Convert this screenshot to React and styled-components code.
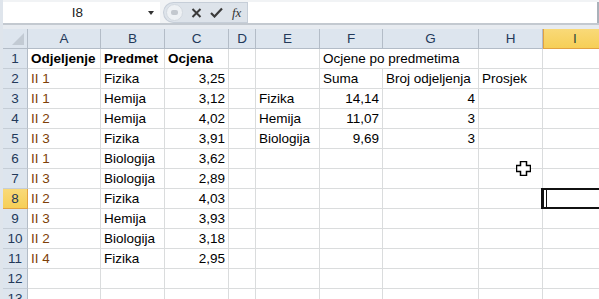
import React from 'react'
import styled, { createGlobalStyle } from 'styled-components'

const GlobalStyle = createGlobalStyle`
  body {
    margin: 0;
    overflow: hidden;
    font-family: "Liberation Sans", Arial, sans-serif;
  }
`;

const Window = styled.div`
  width: 599px;
  height: 299px;
  overflow: hidden;
  background-color: #dfe5ec;
  padding-left: 3px;
  box-sizing: border-box;
`;

const FormulaBar = styled.div`
  display: flex;
  height: 21px;
  padding-top: 2px;
  border-bottom: 2px solid #c3c9d0;
  background-color: #f1f3f5;
`;

const NameBox = styled.div`
  width: 157px;
  display: flex;
  align-items: center;
  background-color: white;
  font-size: 13.5px;
  color: #222;
`;

const NameText = styled.div`
  flex: 1;
  text-align: center;
  padding-left: 4px;
`;

const Arrow = styled.div`
  width: 0;
  height: 0;
  margin-right: 6px;
  border-left: 3.5px solid transparent;
  border-right: 3.5px solid transparent;
  border-top: 4px solid #333;
`;

const ButtonGroup = styled.div`
  width: 84px;
  margin-left: 3px;
  display: flex;
  align-items: center;
  gap: 8px;
  background-color: #dde3ea;
  border: 1px solid #c6ced8;
  border-right: none;
  border-radius: 11px 0 0 11px;
  box-sizing: border-box;
  padding-left: 2px;
`;

const Knob = styled.div`
  width: 15px;
  height: 15px;
  border-radius: 50%;
  background-color: #eef1f4;
  border: 1px solid #d3d9e0;
  display: flex;
  align-items: center;
  justify-content: center;
`;

const KnobDot = styled.div`
  width: 7px;
  height: 5px;
  border-radius: 2px;
  background-color: #c3c8ce;
`;

const Fx = styled.span`
  font-family: "Liberation Serif", serif;
  font-style: italic;
  font-size: 13px;
  color: #333;
  margin-left: 1px;
`;

const FormulaInput = styled.div`
  flex: 1;
  background-color: white;
  border-left: 1px solid #c6ced8;
  border-right: 2px solid #a9b1ba;
`;

const Gap = styled.div`
  height: 4px;
  background-color: #e7ebf0;
`;

const Sheet = styled.div`
  display: grid;
  grid-template-columns: 25px 73px 64px 64px 27px 64px 63px 96px 64px 64px;
  grid-auto-rows: 20px;
  background-color: white;
  font-size: 13.5px;
`;

const Corner = styled.div`
  background-color: #dde5ee;
  border-right: 1px solid #b3bcc7;
  border-bottom: 1px solid #b3bcc7;
  position: relative;
  &::after {
    content: '';
    position: absolute;
    right: 3px;
    bottom: 3px;
    border-left: 12px solid transparent;
    border-bottom: 12px solid #c2cad3;
  }
`;

const ColHead = styled.div`
  background: ${p => (p.$active ? 'linear-gradient(#f9d978, #f6cf57)' : '#dde5ee')};
  border-right: 1px solid ${p => (p.$active ? '#e2a241' : '#b3bcc7')};
  border-bottom: 1px solid ${p => (p.$active ? '#e2a241' : '#b3bcc7')};
  border-left: ${p => (p.$active ? '1px solid #e2a241' : 'none')};
  color: ${p => (p.$active ? '#2d4a3a' : '#23395a')};
  text-align: center;
  line-height: 19px;
`;

const RowHead = styled.div`
  background: ${p => (p.$active ? 'linear-gradient(#f9d978, #f6cf57)' : '#dde5ee')};
  border-right: 1px solid ${p => (p.$active ? '#e2a241' : '#b3bcc7')};
  border-bottom: 1px solid ${p => (p.$active ? '#e2a241' : '#c5cdd6')};
  color: #23395a;
  text-align: center;
  line-height: 19px;
`;

const Cell = styled.div`
  grid-column: span ${p => p.$span || 1};
  border-right: 1px solid #dadcdd;
  border-bottom: 1px solid #dadcdd;
  padding: 0 3px;
  line-height: 19px;
  white-space: nowrap;
  text-align: ${p => (p.$num ? 'right' : 'left')};
  font-weight: ${p => (p.$bold ? 'bold' : 'normal')};
  color: ${p => p.$color || '#000'};
  position: relative;
  overflow: ${p => (p.$selected ? 'visible' : 'hidden')};
  ${p =>
    p.$selected &&
    `
    &::after {
      content: '';
      position: absolute;
      left: -2px;
      top: -1px;
      right: -4px;
      bottom: -1px;
      border: 2px solid #111;
      border-left-width: 3px;
    }
    &::before {
      content: '';
      position: absolute;
      left: 3px;
      top: 0;
      bottom: 0;
      border-left: 1px solid #111;
    }
  `}
`;

const Cursor = styled.svg`
  position: absolute;
  left: 513px;
  top: 132px;
`;

const Page = styled.div`
  position: relative;
`;

const COLS = ['A', 'B', 'C', 'D', 'E', 'F', 'G', 'H', 'I'];
const BROWN = '#7e3f08';

const rows = [
  [['Odjeljenje', { bold: true }], ['Predmet', { bold: true }], ['Ocjena', { bold: true }], '', '', ['Ocjene po predmetima', { span: 2 }], null, '', ''],
  [['II 1', { color: BROWN }], 'Fizika', ['3,25', { num: true }], '', '', 'Suma', 'Broj odjeljenja', 'Prosjek', ''],
  [['II 1', { color: BROWN }], 'Hemija', ['3,12', { num: true }], '', 'Fizika', ['14,14', { num: true }], ['4', { num: true }], '', ''],
  [['II 2', { color: BROWN }], 'Hemija', ['4,02', { num: true }], '', 'Hemija', ['11,07', { num: true }], ['3', { num: true }], '', ''],
  [['II 3', { color: BROWN }], 'Fizika', ['3,91', { num: true }], '', 'Biologija', ['9,69', { num: true }], ['3', { num: true }], '', ''],
  [['II 1', { color: BROWN }], 'Biologija', ['3,62', { num: true }], '', '', '', '', '', ''],
  [['II 3', { color: BROWN }], 'Biologija', ['2,89', { num: true }], '', '', '', '', '', ''],
  [['II 2', { color: BROWN }], 'Fizika', ['4,03', { num: true }], '', '', '', '', '', ''],
  [['II 3', { color: BROWN }], 'Hemija', ['3,93', { num: true }], '', '', '', '', '', ''],
  [['II 2', { color: BROWN }], 'Biologija', ['3,18', { num: true }], '', '', '', '', '', ''],
  [['II 4', { color: BROWN }], 'Fizika', ['2,95', { num: true }], '', '', '', '', '', ''],
  ['', '', '', '', '', '', '', '', ''],
  ['', '', '', '', '', '', '', '', ''],
];

const App = () => {
  return (
    <Window>
      <GlobalStyle />
      <FormulaBar>
        <NameBox>
          <NameText>I8</NameText>
          <Arrow />
        </NameBox>
        <ButtonGroup>
          <Knob>
            <KnobDot />
          </Knob>
          <svg width="11" height="10" viewBox="0 0 11 10">
            <path d="M1.5 1 L9.5 9 M9.5 1 L1.5 9" stroke="#3a3a3a" strokeWidth="2" />
          </svg>
          <svg width="13" height="11" viewBox="0 0 13 11">
            <path d="M1 6 L4.5 9.5 L12 1.5" stroke="#3a3a3a" strokeWidth="2.2" fill="none" />
          </svg>
          <Fx>fx</Fx>
        </ButtonGroup>
        <FormulaInput />
      </FormulaBar>
      <Gap />
      <Page>
        <Sheet>
          <Corner />
          {COLS.map(c => (
            <ColHead key={c} $active={c === 'I'}>{c}</ColHead>
          ))}
          {rows.map((row, r) => (
            <React.Fragment key={r}>
              <RowHead $active={r === 7}>{r + 1}</RowHead>
              {row.map((cell, c) => {
                if (cell === null) return null;
                const [text, opts] = Array.isArray(cell) ? cell : [cell, {}];
                return (
                  <Cell
                    key={c}
                    $span={opts.span}
                    $bold={opts.bold}
                    $num={opts.num}
                    $color={opts.color}
                    $selected={r === 7 && c === 8}
                  >
                    {text}
                  </Cell>
                );
              })}
            </React.Fragment>
          ))}
        </Sheet>
        <Cursor width="15" height="15" viewBox="0 0 15 15">
          <path
            d="M4.5 0.5 H10.5 V4.5 H14.5 V10.5 H10.5 V14.5 H4.5 V10.5 H0.5 V4.5 H4.5 Z"
            fill="white"
            stroke="black"
            strokeWidth="1.5"
          />
        </Cursor>
      </Page>
    </Window>
  )
}

export default App
